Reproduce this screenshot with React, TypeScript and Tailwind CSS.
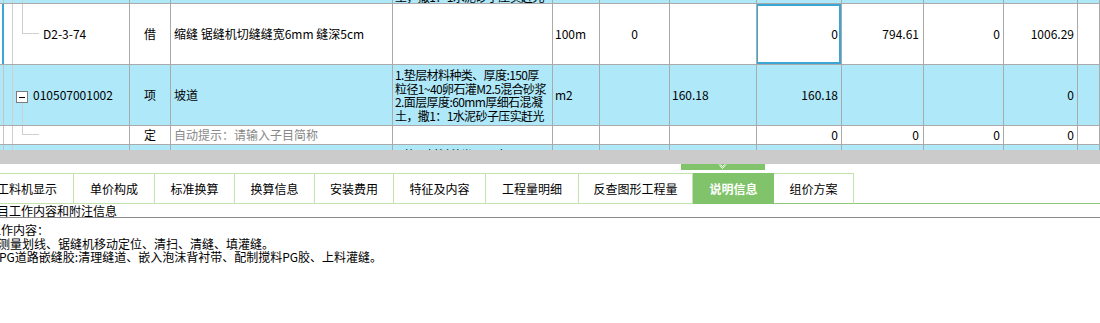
import React from "react";

const W = [
  "w-[130px]",
  "w-[41px]",
  "w-[222px]",
  "w-[160px]",
  "w-[47px]",
  "w-[70px]",
  "w-[87px]",
  "w-[85px]",
  "w-[82px]",
  "w-[80px]",
  "w-[74px]",
];

const cellBase =
  "shrink-0 h-full border-r border-b border-[#aaaaaa] flex items-center overflow-hidden relative whitespace-nowrap";

type TreeKind = "none" | "child" | "parent" | "childEnd" | "plain";

function TreeCell({
  kind,
  code,
  selected,
  elbow,
}: {
  kind: TreeKind;
  code?: string;
  selected?: boolean;
  elbow?: number;
}) {
  return (
    <div className={`${cellBase} ${W[0]}`}>
      <div
        className={`absolute left-0 top-0 bottom-0 w-[4px] border-r ${
          selected ? "border-[#3aa6d4] bg-white" : "border-[#c4c4c4]"
        }`}
      >
        {selected && <div className="absolute left-[2px] top-0 bottom-0 w-[2px] bg-[#3aa6d4]" />}
      </div>
      <div className="absolute left-[12px] top-0 bottom-0 w-px bg-[#cfcfcf]" />
      {(kind === "child" || kind === "childEnd") && (
        <>
          <div
            className="absolute left-[22px] top-0 w-px bg-[#cfcfcf]"
            style={{ height: elbow }}
          />
          <div
            className="absolute left-[22px] h-px w-[17px] bg-[#cfcfcf]"
            style={{ top: elbow }}
          />
        </>
      )}
      {kind === "plain" && <div className="absolute left-[22px] top-0 bottom-0 w-px bg-[#cfcfcf]" />}
      {kind === "parent" && (
        <>
          <div className="absolute left-[16px] top-[26px] w-[12px] h-[12px] border border-[#7c7c7c] bg-white flex items-center justify-center">
            <div className="w-[6px] h-px bg-black" />
          </div>
          <div className="absolute left-[22px] top-[38px] bottom-0 w-px bg-[#cfcfcf]" />
        </>
      )}
      {code && (
        <span className={`absolute ${kind === "parent" ? "left-[33px]" : "left-[43px]"} top-1/2 -translate-y-1/2`}>
          {code}
        </span>
      )}
    </div>
  );
}

function Desc({ lines }: { lines: string[] }) {
  return (
    <div className="pl-[2px] flex flex-col leading-[13.5px] tracking-[-0.6px]">
      {lines.map((l, i) => (
        <span key={i} className="whitespace-nowrap">
          {l}
        </span>
      ))}
    </div>
  );
}

const descA = [
  "1.垫层材料种类、厚度:150厚",
  "粒径1~40卵石灌M2.5混合砂浆",
  "2.面层厚度:60mm厚细石混凝",
  "土，撒1：1水泥砂子压实赶光",
];

export default function App() {
  return (
    <div className="w-[1100px] h-[323px] bg-white overflow-hidden text-[12px] text-black font-['Noto_Sans_CJK_SC','Noto_Sans',sans-serif]">
      {/* grid */}
      <div className="h-[150px] overflow-hidden">
        <div className="-mt-[57px] flex flex-col">
          {/* row 0 (scrolled) */}
          <div className="flex h-[61px] bg-[#aee8f9]">
            <TreeCell kind="plain" />
            <div className={`${cellBase} ${W[1]}`} />
            <div className={`${cellBase} ${W[2]}`} />
            <div className={`${cellBase} ${W[3]} items-end`}>
              <div className="mb-0">
                <Desc lines={["1.垫层材料种类、厚度:150厚", "粒径1~40卵石灌M2.5混合砂浆", "2.面层厚度:60mm厚细石混凝", "土，撒1：1水泥砂子压实赶光"]} />
              </div>
            </div>
            <div className={`${cellBase} ${W[4]}`} />
            <div className={`${cellBase} ${W[5]}`} />
            <div className={`${cellBase} ${W[6]}`} />
            <div className={`${cellBase} ${W[7]}`} />
            <div className={`${cellBase} ${W[8]}`} />
            <div className={`${cellBase} ${W[9]}`} />
            <div className={`${cellBase} ${W[10]}`} />
            <div className={`${cellBase} flex-1`} />
          </div>
          {/* row 1 */}
          <div className="flex h-[61px] bg-white">
            <TreeCell kind="child" code="D2-3-74" selected elbow={29} />
            <div className={`${cellBase} ${W[1]} justify-center`}>借</div>
            <div className={`${cellBase} ${W[2]} pl-[3px]`}>缩缝 锯缝机切缝缝宽6mm 缝深5cm</div>
            <div className={`${cellBase} ${W[3]}`} />
            <div className={`${cellBase} ${W[4]} pl-[2px]`}>100m</div>
            <div className={`${cellBase} ${W[5]} justify-center`}>0</div>
            <div className={`${cellBase} ${W[6]}`} />
            <div className={`${cellBase} ${W[7]} justify-end pr-[3px]`}>
              0
              <div className="absolute -left-px top-0 right-0 bottom-0 border-2 border-[#3aa6d4] z-10" />
            </div>
            <div className={`${cellBase} ${W[8]} justify-end pr-[4px]`}>794.61</div>
            <div className={`${cellBase} ${W[9]} justify-end pr-[3px]`}>0</div>
            <div className={`${cellBase} ${W[10]} justify-end pr-[3px]`}>1006.29</div>
            <div className={`${cellBase} flex-1`} />
          </div>
          {/* row 2 */}
          <div className="flex h-[61px] bg-[#aee8f9]">
            <TreeCell kind="parent" code="010507001002" />
            <div className={`${cellBase} ${W[1]} justify-center`}>项</div>
            <div className={`${cellBase} ${W[2]} pl-[3px]`}>坡道</div>
            <div className={`${cellBase} ${W[3]}`}>
              <Desc lines={descA} />
            </div>
            <div className={`${cellBase} ${W[4]} pl-[2px]`}>m2</div>
            <div className={`${cellBase} ${W[5]}`} />
            <div className={`${cellBase} ${W[6]} pl-[2px]`}>160.18</div>
            <div className={`${cellBase} ${W[7]} justify-end pr-[3px]`}>160.18</div>
            <div className={`${cellBase} ${W[8]}`} />
            <div className={`${cellBase} ${W[9]}`} />
            <div className={`${cellBase} ${W[10]} justify-end pr-[3px]`}>0</div>
            <div className={`${cellBase} flex-1`} />
          </div>
          {/* row 3 */}
          <div className="flex h-[19px] bg-white">
            <TreeCell kind="childEnd" elbow={8} />
            <div className={`${cellBase} ${W[1]} justify-center`}>定</div>
            <div className={`${cellBase} ${W[2]} pl-[3px] text-[#888888]`}>自动提示：请输入子目简称</div>
            <div className={`${cellBase} ${W[3]}`} />
            <div className={`${cellBase} ${W[4]}`} />
            <div className={`${cellBase} ${W[5]}`} />
            <div className={`${cellBase} ${W[6]}`} />
            <div className={`${cellBase} ${W[7]} justify-end pr-[3px]`}>0</div>
            <div className={`${cellBase} ${W[8]} justify-end pr-[4px]`}>0</div>
            <div className={`${cellBase} ${W[9]} justify-end pr-[3px]`}>0</div>
            <div className={`${cellBase} ${W[10]} justify-end pr-[3px]`}>0</div>
            <div className={`${cellBase} flex-1`} />
          </div>
          {/* row 4 (cut) */}
          <div className="flex h-[61px] bg-[#aee8f9]">
            <TreeCell kind="none" />
            <div className={`${cellBase} ${W[1]}`} />
            <div className={`${cellBase} ${W[2]}`} />
            <div className={`${cellBase} ${W[3]} items-start pt-[3px]`}>
              <Desc lines={["1.垫层材料种类、厚度:150厚", "粒径1~40卵石灌M2.5混合砂浆"]} />
            </div>
            <div className={`${cellBase} ${W[4]}`} />
            <div className={`${cellBase} ${W[5]}`} />
            <div className={`${cellBase} ${W[6]}`} />
            <div className={`${cellBase} ${W[7]}`} />
            <div className={`${cellBase} ${W[8]}`} />
            <div className={`${cellBase} ${W[9]}`} />
            <div className={`${cellBase} ${W[10]}`} />
            <div className={`${cellBase} flex-1`} />
          </div>
        </div>
      </div>

      {/* splitter */}
      <div className="h-[14px] bg-[#cbcbcb]" />
      <div className="h-[6px] flex">
        <div className="ml-[681px] w-[84px] h-full bg-[#80c36a] flex justify-center">
          <svg width="9" height="6" viewBox="0 0 9 6" className="ml-[-2px]">
            <path d="M1 0.5 L4.5 4.5 L8 0.5" fill="none" stroke="white" strokeWidth="1" />
            <path d="M2.5 0.5 L4.5 2.5 L6.5 0.5" fill="none" stroke="white" strokeWidth="1" />
          </svg>
        </div>
      </div>

      {/* tabs */}
      <div className="mt-[3px] h-[31px] flex">
        <div className="-ml-[19px] w-[93px] shrink-0 h-full border-y border-r border-[#c3e3ae] flex items-center justify-center">工料机显示</div>
        <div className="w-[81px] shrink-0 h-full border-y border-r border-[#c3e3ae] flex items-center justify-center">单价构成</div>
        <div className="w-[80px] shrink-0 h-full border-y border-r border-[#c3e3ae] flex items-center justify-center">标准换算</div>
        <div className="w-[80px] shrink-0 h-full border-y border-r border-[#c3e3ae] flex items-center justify-center">换算信息</div>
        <div className="w-[79px] shrink-0 h-full border-y border-r border-[#c3e3ae] flex items-center justify-center">安装费用</div>
        <div className="w-[92px] shrink-0 h-full border-y border-r border-[#c3e3ae] flex items-center justify-center">特征及内容</div>
        <div className="w-[93px] shrink-0 h-full border-y border-r border-[#c3e3ae] flex items-center justify-center">工程量明细</div>
        <div className="w-[114px] shrink-0 h-full border-y border-r border-[#c3e3ae] flex items-center justify-center">反查图形工程量</div>
        <div className="w-[81px] shrink-0 h-full bg-[#80c36a] text-white font-bold flex items-center justify-center">说明信息</div>
        <div className="w-[80px] shrink-0 h-full border-y border-r border-[#c3e3ae] border-b-[#8fca7a] flex items-center justify-center">组价方案</div>
        <div className="flex-1 h-full border-b border-[#8fca7a]" />
      </div>

      {/* info panel */}
      <div className="h-[14px] border-b border-[#8a8a8a] leading-[13px] whitespace-nowrap">
        <span className="-ml-[15px] inline-block">子目工作内容和附注信息</span>
      </div>
      <div className="pt-[5px] leading-[13.5px] whitespace-nowrap flex flex-col">
        <span className="-ml-[11px]">工作内容：</span>
        <span className="-ml-[2px]">测量划线、锯缝机移动定位、清扫、清缝、填灌缝。</span>
        <span className="-ml-[1px]">PG道路嵌缝胶:清理缝道、嵌入泡沫背衬带、配制搅料PG胶、上料灌缝。</span>
      </div>
    </div>
  );
}
